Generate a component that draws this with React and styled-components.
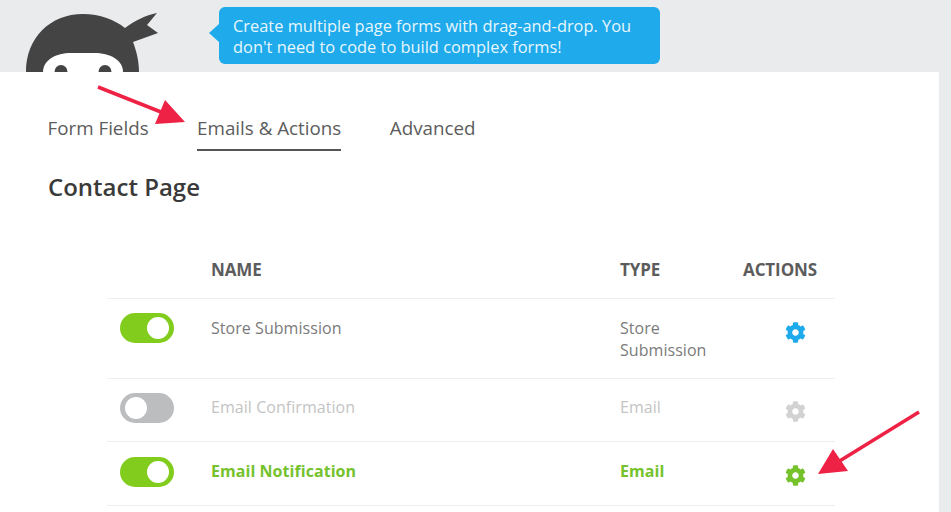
import React from "react";
import styled, { createGlobalStyle } from "styled-components";
import { FaCog } from "react-icons/fa";

const Global = createGlobalStyle`
  html, body { margin: 0; padding: 0; background: #e9ebed; }
  body { font-family: "Open Sans", "Noto Sans", sans-serif; width: 951px; height: 512px; overflow: hidden; }
`;

const Page = styled.div`
  position: relative;
  width: 951px;
  height: 512px;
  overflow: hidden;
`;

const Header = styled.header`
  height: 72px;
  display: flex;
  align-items: flex-start;
  overflow: hidden;
`;

const Mascot = styled.svg`
  flex: none;
  width: 134px;
  height: 72px;
  margin-left: 26px;
`;

const Bubble = styled.div`
  position: relative;
  margin: 7px 0 0 59px;
  width: 441px;
  height: 57px;
  box-sizing: border-box;
  padding: 8px 0 0 14px;
  background: #1eaaeb;
  border-radius: 6px;
  color: #e8f6fd;
  font-size: 16.4px;
  line-height: 21px;
  white-space: nowrap;

  &::before {
    content: "";
    position: absolute;
    left: -10px;
    top: 17px;
    border-style: solid;
    border-width: 9px 10px 9px 0;
    border-color: transparent #1eaaeb transparent transparent;
  }
`;

const Panel = styled.main`
  width: 939px;
  height: 440px;
  background: #fff;
  box-sizing: border-box;
  padding-top: 43px;
`;

const Tabs = styled.nav`
  display: flex;
  gap: 48.5px;
  padding-left: 47.5px;
`;

const Tab = styled.div`
  height: 34px;
  color: #5c5c5c;
  font-size: 18.8px;
  line-height: 26px;
  border-bottom: 2px solid ${(p) => (p.$active ? "#555" : "transparent")};
`;

const Title = styled.h1`
  margin: 21px 0 0 48px;
  color: #3a3a3a;
  font-size: 24px;
  line-height: 30px;
  font-weight: 600;
`;

const Table = styled.div`
  width: 728px;
  margin: 53px 0 0 107px;
`;

const Row = styled.div`
  display: grid;
  grid-template-columns: 104px 409px 123px 92px;
  height: ${(p) => p.$h}px;
  box-sizing: border-box;
  border-bottom: 1px solid #eeeeee;
  color: ${(p) => p.$color};
  font-size: 16px;
  line-height: 22px;
  font-weight: ${(p) => (p.$bold ? 700 : 400)};
  letter-spacing: 0.05px;
`;

const HeadCell = styled.div`
  color: #5c5c5c;
  font-size: 17px;
  font-weight: 700;
  line-height: 22px;
  padding-top: 4px;
  letter-spacing: -0.1px;
`;

const Cell = styled.div`
  padding-top: ${(p) => p.$top}px;
`;

const ToggleCell = styled.div`
  padding: ${(p) => p.$top}px 0 0 13px;
`;

const Toggle = styled.div`
  width: 54px;
  height: 30px;
  border-radius: 15px;
  box-sizing: border-box;
  padding: 4px 5px;
  display: flex;
  justify-content: ${(p) => (p.$on ? "flex-end" : "flex-start")};
  background: ${(p) => (p.$on ? "#81cc1d" : "#bcbdbf")};

  &::after {
    content: "";
    width: 22px;
    height: 22px;
    border-radius: 50%;
    background: #fff;
  }
`;

const Gear = styled.div`
  padding: ${(p) => p.$top}px 0 0 41.5px;
  color: ${(p) => p.$color};
  font-size: 21px;
  line-height: 0;
`;

const Overlay = styled.svg`
  position: absolute;
  left: 0;
  top: 0;
  pointer-events: none;
`;

const rows = [
  { name: "Store Submission", type: <>Store<br />Submission</>, on: true, color: "#7b7b7b", gear: "#1eaaeb", h: 80, top: 18, tTop: 14, gTop: 23 },
  { name: "Email Confirmation", type: "Email", on: false, color: "#c4c4c4", gear: "#d2d2d2", h: 63, top: 17, tTop: 14, gTop: 22 },
  { name: "Email Notification", type: "Email", on: true, color: "#75c22d", gear: "#75c22d", bold: true, h: 64, top: 18, tTop: 15, gTop: 23 },
];

export default function App() {
  return (
    <Page>
      <Global />
      <Header>
        <Mascot viewBox="0 0 134 72">
          <path fill="#444" d="M0 72 C0 38 24 14 57 14 C74 14 89 20 99 28 C108 21 120 15 131 13 L121 25 L132 33 L107 42 C110 50 113 60 113 72 Z" />
          <path fill="#fff" d="M17 72 C17 60 30 53 45 53 L68 53 C84 53 97 60 97 72 Z" />
          <ellipse cx="35" cy="72" rx="6.5" ry="7" fill="#444" />
          <ellipse cx="79" cy="72" rx="6.5" ry="7" fill="#444" />
        </Mascot>
        <Bubble>
          Create multiple page forms with drag-and-drop. You<br />
          don't need to code to build complex forms!
        </Bubble>
      </Header>
      <Panel>
        <Tabs>
          <Tab>Form Fields</Tab>
          <Tab $active>Emails &amp; Actions</Tab>
          <Tab>Advanced</Tab>
        </Tabs>
        <Title>Contact Page</Title>
        <Table>
          <Row $h={44} $color="#5c5c5c">
            <div />
            <HeadCell>NAME</HeadCell>
            <HeadCell>TYPE</HeadCell>
            <HeadCell>ACTIONS</HeadCell>
          </Row>
          {rows.map((r) => (
            <Row key={r.name} $h={r.h} $color={r.color} $bold={r.bold}>
              <ToggleCell $top={r.tTop}><Toggle $on={r.on} /></ToggleCell>
              <Cell $top={r.top}>{r.name}</Cell>
              <Cell $top={r.top}>{r.type}</Cell>
              <Gear $top={r.gTop} $color={r.gear}><FaCog /></Gear>
            </Row>
          ))}
        </Table>
      </Panel>
      <Overlay width="951" height="512" viewBox="0 0 951 512">
        <line x1="98" y1="87" x2="166" y2="114" stroke="#ee2244" strokeWidth="3.5" />
        <polygon points="165,100 185,122 155,124" fill="#ee2244" />
        <line x1="919" y1="412" x2="838" y2="462" stroke="#ee2244" strokeWidth="3.5" />
        <polygon points="833,449 848,471 818,474" fill="#ee2244" />
      </Overlay>
    </Page>
  );
}
